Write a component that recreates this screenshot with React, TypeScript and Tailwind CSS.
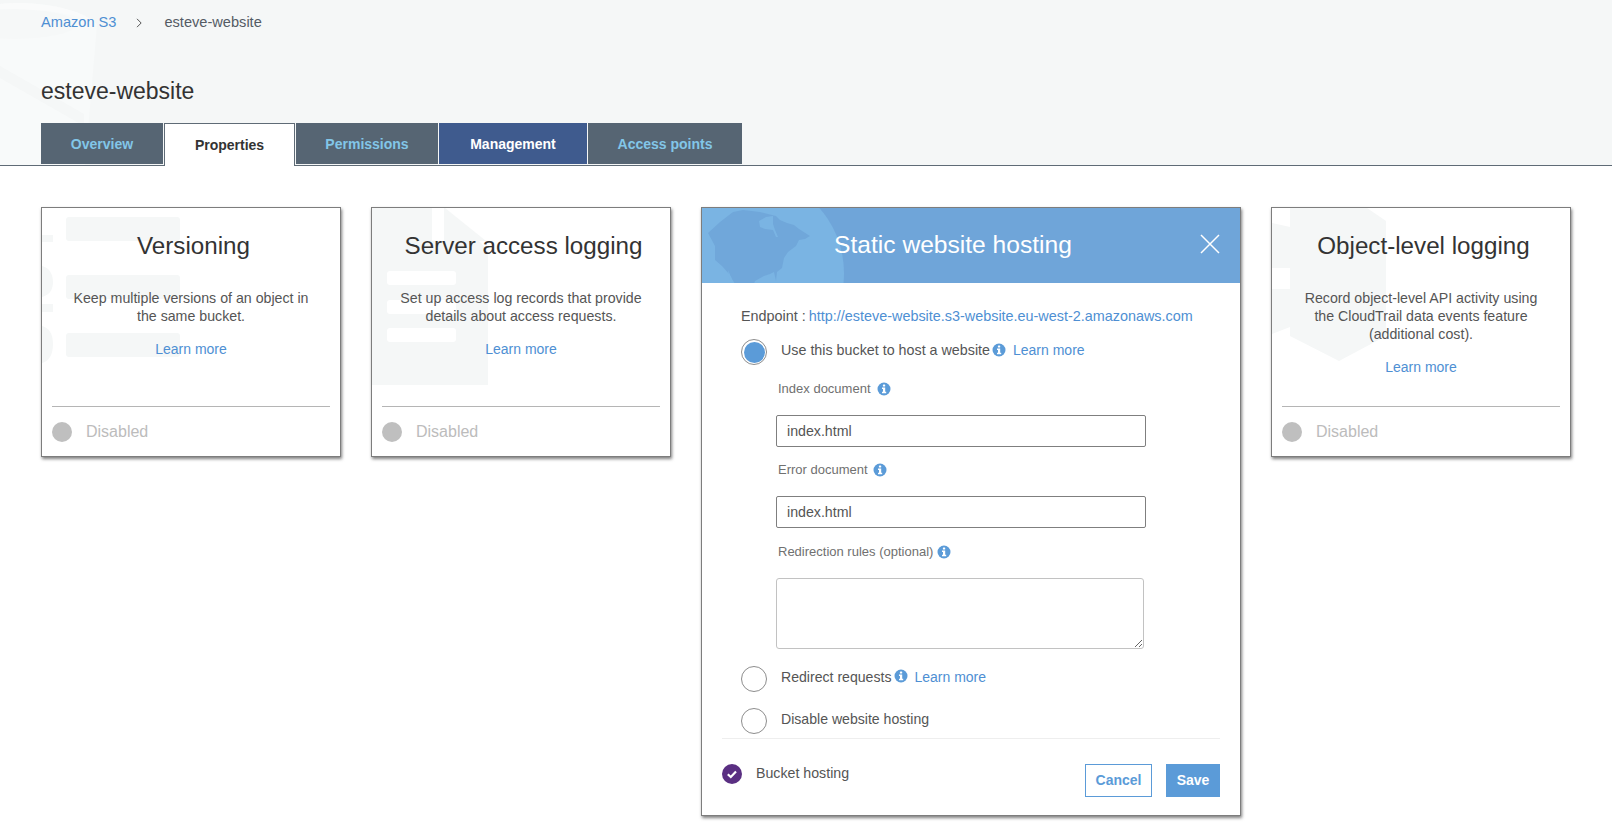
const font = "[font-family:'Liberation_Sans',Arial,sans-serif]"

function InfoIcon({ className = '' }: { className?: string }) {
  return (
    <svg viewBox="0 0 14 14" className={`h-[14px] w-[14px] shrink-0 ${className}`}>
      <circle cx="7" cy="7" r="6.5" fill="#5b9bd8" />
      <rect x="5.9" y="2.4" width="2.3" height="2.1" rx="0.6" fill="#fff" />
      <path d="M5 5.6h3.2v4.2h1v1.4H5V9.8h1V7H5z" fill="#fff" />
    </svg>
  )
}

function Radio({ checked = false }: { checked?: boolean }) {
  return (
    <span className="flex h-[26px] w-[26px] shrink-0 items-center justify-center rounded-full border border-[#8d8d8d] bg-white">
      {checked && <span className="h-[21px] w-[21px] rounded-full bg-[#5b9bd8]" />}
    </span>
  )
}

function StackMark() {
  return (
    <svg viewBox="0 0 300 180" className="absolute left-0 top-0 h-[180px] w-[300px]">
      <rect x="24" y="9" width="114" height="24" rx="3" fill="#f5f7f7" />
      <rect x="24" y="67" width="114" height="24" rx="3" fill="#f5f7f7" />
      <rect x="24" y="125" width="114" height="24" rx="3" fill="#f5f7f7" />
      <path d="M0 27h11v7H0zM0 58c8 2 11 9 11 16s-3 13-11 15zM0 96h11v8H0zM0 118c8 2 11 9 11 18s-3 17-11 19z" fill="#f5f7f7" />
    </svg>
  )
}

function FileMark() {
  return (
    <svg viewBox="0 0 300 180" className="absolute left-0 top-0 h-[180px] w-[300px]">
      <path d="M0 0h60v33h47l9 10v134H0z" fill="#f5f7f7" />
      <path d="M72 0h1l41 33H72z" fill="#f5f7f7" />
      <rect x="15" y="63" width="69" height="14" rx="3" fill="#fff" />
      <rect x="15" y="92" width="69" height="14" rx="3" fill="#fff" />
      <rect x="15" y="120" width="69" height="14" rx="3" fill="#fff" />
    </svg>
  )
}

function HexMark() {
  return (
    <svg viewBox="0 0 300 180" className="absolute left-0 top-0 h-[180px] w-[300px]">
      <path d="M18 0h77l19 13v115l-47 25-49-25v-9L0 126V15l18 4z" fill="#f5f7f7" />
      <rect x="0" y="60" width="18" height="21" fill="#fff" />
    </svg>
  )
}

function FeatureCard({
  title,
  lines,
  mark,
}: {
  title: string
  lines: string[]
  mark: React.ReactNode
}) {
  return (
    <div className="relative flex h-[250px] w-[300px] shrink-0 flex-col overflow-hidden border border-[#7d7d7d] bg-white shadow-[1px_2px_3px_rgba(0,0,0,0.5)]">
      {mark}
      <div className="relative flex flex-1 flex-col items-center px-[10px] text-center">
        <h2 className="ml-[5px] mt-[22px] h-[32px] text-[24.2px] leading-[32px] text-[#333]">{title}</h2>
        <div className="mt-[27px] text-[14.2px] leading-[18px] text-[#555]">
          {lines.map((line) => (
            <div key={line}>{line}</div>
          ))}
        </div>
        <a className="mt-[15px] text-[14px] leading-[18px] text-[#4e8fd3]">Learn more</a>
      </div>
      <div className="relative mx-[10px] flex h-[50px] items-center gap-[14px] border-t border-[#b5b5b5]">
        <span className="h-[20px] w-[20px] rounded-full bg-[#bfbfbf]" />
        <span className="text-[16px] text-[#bcbcbc]">Disabled</span>
      </div>
    </div>
  )
}

function Tab({ label, width, active, blue }: { label: string; width: string; active?: boolean; blue?: boolean }) {
  if (active) {
    return (
      <div className={`relative z-10 -mb-px flex h-[43px] items-center justify-center border border-b-0 border-[#5f6b76] bg-white text-[14px] font-bold text-[#333] ${width}`}>
        {label}
      </div>
    )
  }
  return (
    <div className={`mb-px flex h-[41px] items-center justify-center pt-[2px] text-[14px] font-bold ${width} ${blue ? 'bg-[#3f5b8e] text-white' : 'bg-[#566573] text-[#82c6e8]'}`}>
      {label}
    </div>
  )
}

function FieldLabel({ label, gap }: { label: string; gap: string }) {
  return (
    <div className="flex h-[18px] items-center pl-[76px] text-[13px] text-[#707070]">
      <span>{label}</span>
      <InfoIcon className={gap} />
    </div>
  )
}

function TextField() {
  return (
    <input
      readOnly
      value="index.html"
      className="ml-[74px] block h-[32px] w-[370px] rounded-[2px] border border-[#7f7f7f] bg-white px-[10px] text-[14.2px] text-[#555] outline-none"
    />
  )
}

function Globe() {
  return (
    <svg viewBox="0 0 170 75" className="absolute left-0 top-0 h-[75px] w-[170px]">
      <circle cx="44" cy="65" r="98" fill="#7ab4e3" />
      <path
        d="M6 25L18 14L31 4L41 2L58 4L74 8L78 12L85 15L92 17L97 21L108 28L103 31L97 32L94 38L86 44L82 50L80 60L75 64L74 73L72 64L68 66L62 68L53 73L52 76L33 76L27 66L20 58L13 52L13 38Z"
        fill="#70a7da"
      />
      <path d="M57 13L64 9L71 8L71 16L73 22L76 29L74 29L71 22L63 21L58 19Z" fill="#7ab4e3" />
      <path d="M26 62L32 76L28 76Z" fill="#7ab4e3" />
    </svg>
  )
}

function StaticHostingPanel() {
  return (
    <div className="flex h-[609px] w-[540px] shrink-0 flex-col border border-[#7d7d7d] bg-white shadow-[1px_2px_3px_rgba(0,0,0,0.5)]">
      <div className="relative flex h-[75px] items-center justify-center overflow-hidden bg-[#6fa5d9] pr-[36px]">
        <Globe />
        <h2 className="relative text-[24.6px] text-white">Static website hosting</h2>
        <svg viewBox="0 0 20 20" className="absolute right-[20px] top-[26px] h-[20px] w-[20px]" fill="none" stroke="#fff" strokeWidth="1.5">
          <path d="M1 1l18 18M19 1L1 19" />
        </svg>
      </div>

      <div className="flex-1">
        <div className="mt-[25px] flex h-[18px] items-center pl-[39px] text-[14.4px] text-[#555]">
          <span className="mr-[3px]">Endpoint :</span>
          <a className="text-[#4e8fd3]">http://esteve-website.s3-website.eu-west-2.amazonaws.com</a>
        </div>

        <div className="mt-[13px] flex h-[26px] items-center pl-[39px] text-[14.3px] text-[#555]">
          <Radio checked />
          <span className="ml-[14px] -mt-[3px]">Use this bucket to host a website</span>
          <InfoIcon className="-mt-[5px] ml-[2px]" />
          <a className="ml-[7px] -mt-[3px] text-[14px] text-[#4e8fd3]">Learn more</a>
        </div>

        <div className="mt-[15px]">
          <FieldLabel label="Index document" gap="ml-[6px]" />
        </div>
        <div className="mt-[17px]">
          <TextField />
        </div>
        <div className="mt-[14px]">
          <FieldLabel label="Error document" gap="ml-[5px]" />
        </div>
        <div className="mt-[17px]">
          <TextField />
        </div>
        <div className="mt-[15px]">
          <FieldLabel label="Redirection rules (optional)" gap="ml-[4px]" />
        </div>
        <textarea
          readOnly
          className="ml-[74px] mt-[17px] block h-[71px] w-[368px] rounded-[3px] border border-[#c2c2c2] bg-white outline-none"
        />

        <div className="mt-[17px] flex h-[26px] items-center pl-[39px] text-[14.1px] text-[#555]">
          <Radio />
          <span className="ml-[14px] -mt-[3px]">Redirect requests</span>
          <InfoIcon className="-mt-[6px] ml-[3px]" />
          <a className="ml-[6px] -mt-[4px] text-[14px] text-[#4e8fd3]">Learn more</a>
        </div>
        <div className="mt-[16px] flex h-[26px] items-center pl-[39px] text-[14.1px] text-[#555]">
          <Radio />
          <span className="ml-[14px] -mt-[3px]">Disable website hosting</span>
        </div>
      </div>

      <div className="mx-[20px] flex h-[77px] justify-between border-t border-[#eee] pt-[25px]">
        <div className="flex h-[20px] items-center gap-[14px] text-[14.2px] text-[#555]">
          <svg viewBox="0 0 20 20" className="h-[20px] w-[20px]">
            <circle cx="10" cy="10" r="10" fill="#5a2f82" />
            <path d="M5.8 10.2l3 2.8 5.2-5.4" fill="none" stroke="#fff" strokeWidth="2.2" />
          </svg>
          <span>Bucket hosting</span>
        </div>
        <div className="flex h-[33px] gap-[14px] text-[14px] font-bold">
          <button className="h-[33px] w-[67px] border border-[#5b9bd8] bg-white text-[#5b9bd8]">Cancel</button>
          <button className="h-[33px] w-[54px] bg-[#5b9bd8] text-white">Save</button>
        </div>
      </div>
    </div>
  )
}

export default function App() {
  return (
    <div className={`h-[824px] overflow-hidden bg-white ${font}`}>
      <header className="relative h-[166px] border-b border-[#5f6b76] bg-[#f5f7f7] pl-[41px]">
        <svg viewBox="0 0 120 165" className="absolute left-0 top-0 h-[165px] w-[120px]">
          <path d="M0 4C40 0 85 10 97 25L85 165H0z" fill="#f8fafa" />
          <ellipse cx="15" cy="24" rx="62" ry="15" fill="#f6f8f8" />
          <path d="M0 4C40 0 85 10 97 25C90 15 40 8 0 9z" fill="#fafbfb" />
          <path d="M0 66l84 48v12L0 78z" fill="#f5f7f7" />
        </svg>
        <nav className="relative flex h-[45px] items-center text-[14.6px]">
          <a className="text-[#4e8fd3]">Amazon S3</a>
          <svg viewBox="0 0 8 12" className="ml-[20px] h-[10px] w-[7px]" fill="none" stroke="#555" strokeWidth="1.2">
            <path d="M1 1l5 5-5 5" />
          </svg>
          <span className="ml-[21px] text-[#545b64]">esteve-website</span>
        </nav>
        <h1 className="relative mt-[31px] h-[30px] text-[23px] leading-[30px] text-[#333]">esteve-website</h1>
        <div className="absolute bottom-0 left-[41px] flex gap-px">
          <Tab label="Overview" width="w-[122px]" />
          <Tab label="Properties" width="w-[131px]" active />
          <Tab label="Permissions" width="w-[142px]" />
          <Tab label="Management" width="w-[148px]" blue />
          <Tab label="Access points" width="w-[154px]" />
        </div>
      </header>

      <main className="flex items-start gap-[30px] pl-[41px] pt-[41px]">
        <FeatureCard
          title="Versioning"
          lines={['Keep multiple versions of an object in', 'the same bucket.']}
          mark={<StackMark />}
        />
        <FeatureCard
          title="Server access logging"
          lines={['Set up access log records that provide', 'details about access requests.']}
          mark={<FileMark />}
        />
        <StaticHostingPanel />
        <FeatureCard
          title="Object-level logging"
          lines={['Record object-level API activity using', 'the CloudTrail data events feature', '(additional cost).']}
          mark={<HexMark />}
        />
      </main>
    </div>
  )
}
